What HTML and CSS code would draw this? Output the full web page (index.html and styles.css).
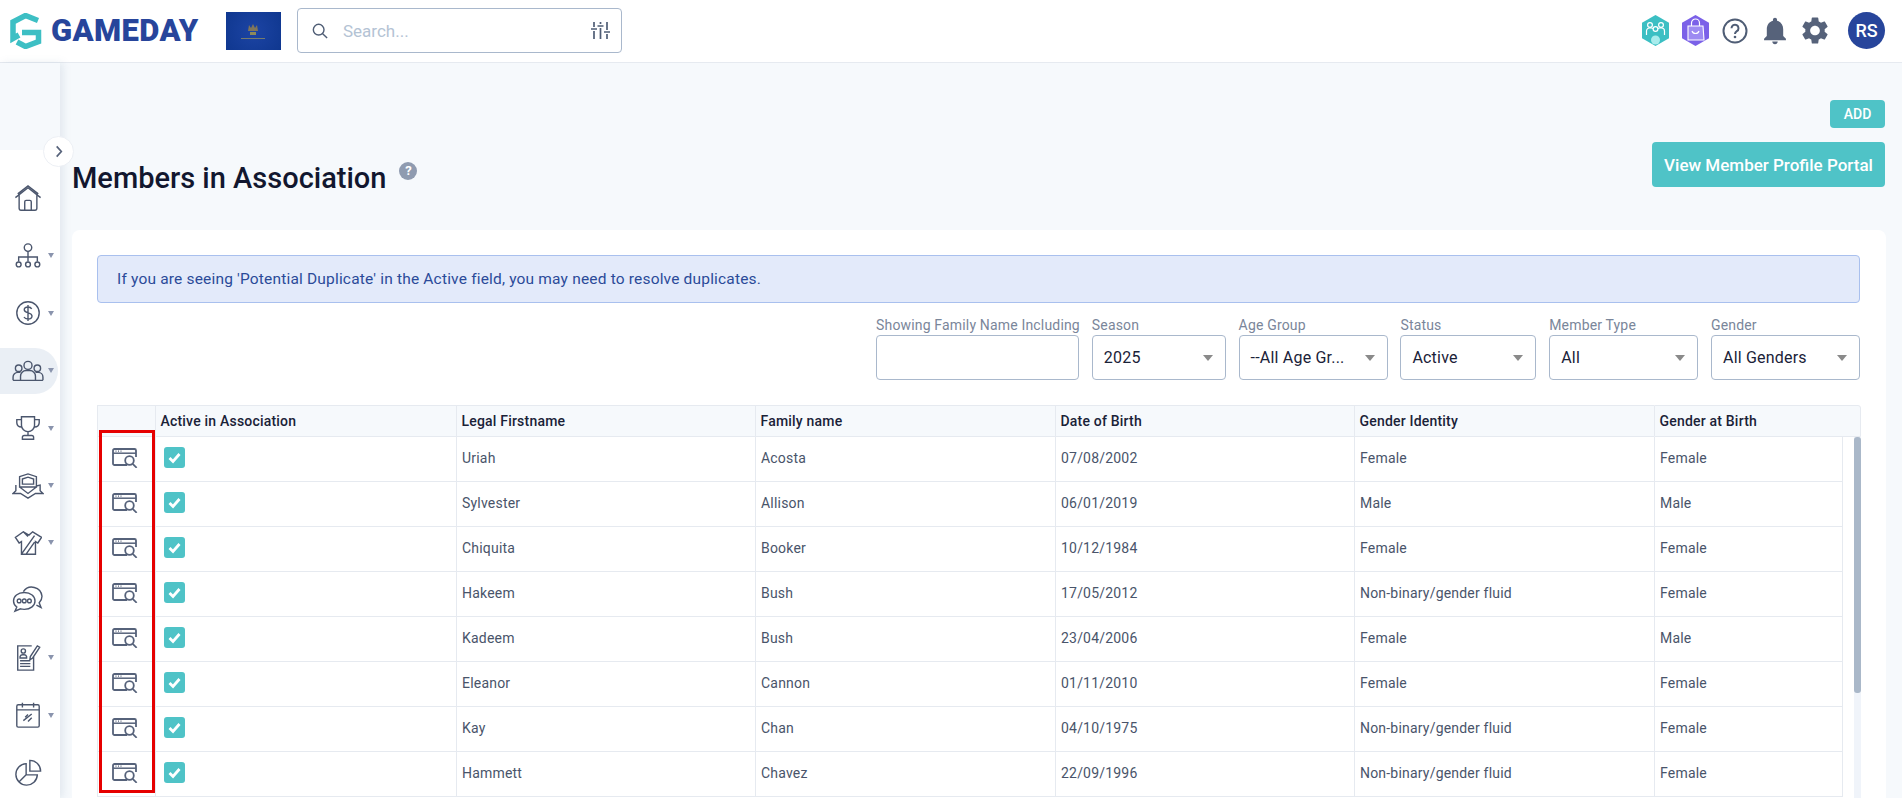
FILE: index.html
```html
<!DOCTYPE html>
<html lang="en">
<head>
<meta charset="utf-8">
<title>Members in Association</title>
<link rel="stylesheet" href="styles.css">
</head>
<body>
<svg class="defs" width="0" height="0" aria-hidden="true">
  <symbol id="view" viewBox="0 0 26 20">
    <path d="M15 17H2.5A1.5 1.5 0 0 1 1 15.500V2.500A1.500 1.500 0 0 1 2.500 1h20A1.500 1.500 0 0 1 24 2.500V9" fill="none" stroke="currentColor" stroke-width="1.800"/>
    <path d="M1 5.200h23" fill="none" stroke="currentColor" stroke-width="1.500"/>
    <path d="M3.500 3.100h1M6 3.100h1M8.500 3.100h1" fill="none" stroke="currentColor" stroke-width="1.200"/>
    <circle cx="17.500" cy="12.500" r="4.300" fill="#fff" stroke="currentColor" stroke-width="1.800"/>
    <path d="M20.700 15.800l4 4" fill="none" stroke="currentColor" stroke-width="1.800"/>
  </symbol>
  <symbol id="check" viewBox="0 0 21 21">
    <rect width="21" height="21" rx="3" fill="#4fc3c7"/>
    <path d="M5.500 11l3.500 3.500 6.500-7.500" fill="none" stroke="#fff" stroke-width="2.800"/>
  </symbol>
</svg>

<header class="topbar">
  <div class="brand">
    <svg class="brand-mark" viewBox="0 0 32 36" aria-hidden="true">
      <path d="M28 7.500L15.500 2.500 3 9v16.500l6-3.500" fill="none" stroke="#3dbfc4" stroke-width="5.500"/>
      <path d="M12 19.500h16.500v9L15.500 33.500 7 29" fill="none" stroke="#3dbfc4" stroke-width="5.500"/>
    </svg>
    <span class="brand-name">GAMEDAY</span>
  </div>
  <div class="flag" aria-hidden="true">
    <svg viewBox="0 0 55 38" width="55" height="38">
      <path d="M23 13l2 3 2-4 2 4 2-3 1 6h-10z" fill="#a98b3d" opacity=".7"/>
      <rect x="24" y="20" width="6" height="3" fill="#8d8a5a"/>
      <path d="M15 26.500h24" stroke="#8e8c62" stroke-width=".8"/>
    </svg>
  </div>
  <div class="search">
    <svg class="search-icon" viewBox="0 0 18 18" aria-hidden="true"><circle cx="7.500" cy="7.500" r="6" fill="none" stroke="#4f5d75" stroke-width="1.600"/><path d="M12 12l5 5" stroke="#4f5d75" stroke-width="1.600"/></svg>
    <span class="search-text">Search...</span>
    <svg class="filter-icon" viewBox="0 0 19 19" aria-hidden="true"><path d="M3 1v5M3 10v8M9.500 1v2M9.500 7v11M16 1v8M16 13v5M0 8h6M6.500 5h6M13 11h6" fill="none" stroke="#4f5d75" stroke-width="1.700"/></svg>
  </div>
  <div class="top-actions">
    <svg class="hex-a" viewBox="0 0 27 31" aria-hidden="true">
      <path d="M13.500 0L27 7.700v15.600L13.500 31 0 23.300V7.700z" fill="#3bbfc3"/>
      <g fill="none" stroke="#fff" stroke-width="1.200"><circle cx="8" cy="10" r="2.400"/><circle cx="19" cy="10" r="2.400"/><path d="M4.500 20v-4a3 3 0 0 1 3-3h2a3 3 0 0 1 1.500.5M22.500 20v-4a3 3 0 0 0-3-3h-2a3 3 0 0 0-1.500.5"/></g>
      <circle cx="13.500" cy="14" r="2.400" fill="none" stroke="#fff" stroke-width="1.200"/>
      <circle cx="13.500" cy="25" r="4.500" fill="#a8ecec"/>
    </svg>
    <svg class="hex-b" viewBox="0 0 27 31" aria-hidden="true">
      <path d="M13.500 0L27 7.700v15.600L13.500 31 0 23.300V7.700z" fill="#7b61e8"/>
      <path d="M6 11h15l1 14H6z" fill="#9d8bf2" stroke="#fff" stroke-width="1.100"/>
      <path d="M9.500 11V8a4 4 0 0 1 8 0v3M10 16a3.700 3.700 0 0 0 7 0" fill="none" stroke="#fff" stroke-width="1.200"/>
    </svg>
    <svg class="help" viewBox="0 0 26 26" aria-hidden="true"><circle cx="13" cy="13" r="11.500" fill="none" stroke="#4f5d75" stroke-width="2"/><path d="M9.500 10.200a3.500 3.500 0 1 1 5.300 3c-1.200.8-1.800 1.300-1.800 2.800" fill="none" stroke="#4f5d75" stroke-width="2"/><circle cx="13" cy="19" r="1.300" fill="#4f5d75"/></svg>
    <svg class="bell" viewBox="3.500 2 17 20.500" aria-hidden="true"><path fill="#56627a" d="M12 22c1.100 0 2-.9 2-2h-4c0 1.100.9 2 2 2zm6-6v-5c0-3.070-1.630-5.640-4.500-6.320V4c0-.83-.67-1.500-1.500-1.500s-1.500.67-1.500 1.500v.68C7.640 5.360 6 7.920 6 11v5l-2 2v1h16v-1l-2-2z"/></svg>
    <svg class="gear" viewBox="2.500 2 19 20" aria-hidden="true"><path fill="#56627a" d="M19.140 12.940c.04-.3.06-.61.06-.94 0-.32-.02-.64-.07-.94l2.030-1.580c.18-.14.23-.41.12-.61l-1.920-3.320c-.12-.22-.37-.29-.59-.22l-2.390.96c-.5-.38-1.030-.7-1.620-.94l-.36-2.540c-.04-.24-.24-.41-.48-.41h-3.840c-.24 0-.43.17-.47.41l-.36 2.540c-.59.24-1.130.57-1.620.94l-2.390-.96c-.22-.08-.47 0-.59.22L2.740 8.870c-.12.21-.08.47.12.61l2.030 1.580c-.05.3-.09.63-.09.94s.02.64.07.94l-2.030 1.580c-.18.14-.23.41-.12.61l1.920 3.320c.12.22.37.29.59.22l2.390-.96c.5.38 1.030.7 1.620.94l.36 2.540c.05.24.24.41.48.41h3.840c.24 0 .44-.17.47-.41l.36-2.540c.59-.24 1.130-.56 1.620-.94l2.390.96c.22.08.47 0 .59-.22l1.920-3.320c.12-.22.07-.47-.12-.61l-2.010-1.580zM12 15.600c-1.980 0-3.600-1.620-3.600-3.600s1.620-3.600 3.600-3.600 3.600 1.620 3.600 3.600-1.620 3.600-3.600 3.600z"/></svg>
    <span class="avatar">RS</span>
  </div>
</header>

<div class="layout">
  <nav class="sidebar">
    <button class="toggle" aria-label="Expand"><svg viewBox="0 0 8 14" width="8" height="13" aria-hidden="true"><path d="M1.500 1.500L6.500 7l-5 5.500" fill="none" stroke="#56627a" stroke-width="1.800"/></svg></button>
    <div class="nav-space"></div>
    <a class="nav-item">
      <svg class="nav-icon" viewBox="0 0 30 30"><path d="M1.500 13.500L15 3l13.500 10.500M5.500 11V25a2 2 0 0 0 2 2h15a2 2 0 0 0 2-2V11M4 9.500L15 1l11 8.500M11.500 27v-9a1.500 1.500 0 0 1 1.500-1.500h4a1.500 1.500 0 0 1 1.500 1.500v9"/></svg>
    </a>
    <a class="nav-item has-sub">
      <svg class="nav-icon" viewBox="0 0 30 30"><circle cx="15" cy="6" r="4"/><path d="M15 10v6M5 21v-5h20v5M15 16v5"/><circle cx="5" cy="24" r="2.600"/><circle cx="15" cy="24" r="2.600"/><circle cx="25" cy="24" r="2.600"/></svg>
    </a>
    <a class="nav-item has-sub">
      <svg class="nav-icon" viewBox="0 0 30 30"><circle cx="15" cy="15" r="12"/><path d="M19 10.500c-.8-1.300-2.200-2-4-2-2.300 0-4 1.200-4 3.100 0 4.300 8.300 2.300 8.300 6.700 0 2-1.900 3.200-4.300 3.200-2 0-3.500-.8-4.300-2.200M15 6.500v17"/></svg>
    </a>
    <a class="nav-item has-sub active">
      <svg class="nav-icon wide" viewBox="0 0 34 30"><circle cx="17" cy="9" r="4.300"/><circle cx="7" cy="12" r="3.500"/><circle cx="27" cy="12" r="3.500"/><path d="M9 25v-4.500a6 6 0 0 1 6-6h4a6 6 0 0 1 6 6V25M1 25v-3.500A5 5 0 0 1 6 16.500h3M33 25v-3.500a5 5 0 0 0-5-5h-3M1 25h32"/></svg>
    </a>
    <a class="nav-item has-sub">
      <svg class="nav-icon" viewBox="0 0 30 30"><path d="M8 3h14v9a7 7 0 0 1-14 0zM8 6H3v3.500A5 5 0 0 0 8 14M22 6h5v3.500A5 5 0 0 1 22 14M15 19v4M9 27v-2a2 2 0 0 1 2-2h8a2 2 0 0 1 2 2v2z"/></svg>
    </a>
    <a class="nav-item has-sub">
      <svg class="nav-icon wide" viewBox="0 0 34 30"><path d="M8 5l9-3 9 3v11H8zM11 7.500l6-2 6 2V13H11zM8 16l9 7 9-7M4 14v6l-3 3h8l8 5 8-5h8l-3-3v-6l-4 1"/></svg>
    </a>
    <a class="nav-item has-sub">
      <svg class="nav-icon" viewBox="0 0 30 30"><path d="M10 3L1.500 9l4 6L8 13.500V27h15V13.500l2.500 1.500 4-6L20 3l-4 3.500zM10 3l5 5M8 27L22 7M13 27l9-13"/></svg>
    </a>
    <a class="nav-item">
      <svg class="nav-icon wide" viewBox="0 0 34 30"><path d="M12 6a11 11 0 0 1 20 5c0 3-1 5-3 7l2 5-5-2.500"/><path d="M13 7C6 7 1.500 11 1.500 16c0 2.700 1.300 5 3.500 6.500L3 27l6-2.500c1.300.4 2.600.5 4 .5 7 0 11.500-4 11.500-9s-4.500-9-11.500-9z" fill="#fff"/><circle cx="7.500" cy="16" r="2"/><circle cx="13" cy="16" r="2"/><circle cx="18.500" cy="16" r="2"/></svg>
    </a>
    <a class="nav-item has-sub">
      <svg class="nav-icon" viewBox="0 0 30 30"><path d="M21 14v14H4V2h15"/><circle cx="10" cy="7.500" r="2.300"/><path d="M6.500 15v-1.500a3 3 0 0 1 3-2h1a3 3 0 0 1 3 2V15zM6.500 18h11M6.500 21h11M6.500 24h11M27.500 3.500L20 15l-3 2 .5-3.500L25 2z"/></svg>
    </a>
    <a class="nav-item has-sub">
      <svg class="nav-icon" viewBox="0 0 30 30"><rect x="3" y="4" width="24" height="24" rx="1.500"/><path d="M3 9.500h24M9 2v5M21 2v5M10 21l9-7M12 17.500l3-3M15 22l4-4"/></svg>
    </a>
    <a class="nav-item">
      <svg class="nav-icon" viewBox="0 0 30 30"><path d="M13 5a11.500 11.500 0 1 0 12 12H13zM13 17l-8 8"/><path d="M17 1.500A11.500 11.500 0 0 1 28.500 13H17z"/></svg>
    </a>
  </nav>

  <main class="content">
    <div class="page-head">
      <div class="title-wrap">
        <h1 class="title">Members in Association</h1>
        <span class="title-help">?</span>
      </div>
      <div class="head-actions">
        <button class="btn btn-sm">ADD</button>
        <button class="btn btn-lg">View Member Profile Portal</button>
      </div>
    </div>

    <section class="card">
      <div class="alert">If you are seeing 'Potential Duplicate' in the Active field, you may need to resolve duplicates.</div>

      <div class="filters">
        <div class="field"><label class="field-label">Showing Family Name Including</label><div class="control"></div></div>
        <div class="field"><label class="field-label">Season</label><div class="control select">2025</div></div>
        <div class="field"><label class="field-label">Age Group</label><div class="control select">--All Age Gr...</div></div>
        <div class="field"><label class="field-label">Status</label><div class="control select">Active</div></div>
        <div class="field"><label class="field-label">Member Type</label><div class="control select">All</div></div>
        <div class="field"><label class="field-label">Gender</label><div class="control select">All Genders</div></div>
      </div>

      <div class="table-wrap">
        <table class="grid">
          <colgroup>
            <col class="c-view"><col class="c-active"><col class="c-first"><col class="c-family"><col class="c-dob"><col class="c-identity"><col class="c-birth"><col class="c-gutter">
          </colgroup>
          <thead>
            <tr><th></th><th>Active in Association</th><th>Legal Firstname</th><th>Family name</th><th>Date of Birth</th><th>Gender Identity</th><th colspan="2">Gender at Birth</th></tr>
          </thead>
          <tbody>
            <tr><td class="ic"><svg class="view-icon"><use href="#view"/></svg></td><td class="ck"><svg class="check"><use href="#check"/></svg></td><td>Uriah</td><td>Acosta</td><td>07/08/2002</td><td>Female</td><td>Female</td><td class="gutter"></td></tr>
            <tr><td class="ic"><svg class="view-icon"><use href="#view"/></svg></td><td class="ck"><svg class="check"><use href="#check"/></svg></td><td>Sylvester</td><td>Allison</td><td>06/01/2019</td><td>Male</td><td>Male</td><td class="gutter"></td></tr>
            <tr><td class="ic"><svg class="view-icon"><use href="#view"/></svg></td><td class="ck"><svg class="check"><use href="#check"/></svg></td><td>Chiquita</td><td>Booker</td><td>10/12/1984</td><td>Female</td><td>Female</td><td class="gutter"></td></tr>
            <tr><td class="ic"><svg class="view-icon"><use href="#view"/></svg></td><td class="ck"><svg class="check"><use href="#check"/></svg></td><td>Hakeem</td><td>Bush</td><td>17/05/2012</td><td>Non-binary/gender fluid</td><td>Female</td><td class="gutter"></td></tr>
            <tr><td class="ic"><svg class="view-icon"><use href="#view"/></svg></td><td class="ck"><svg class="check"><use href="#check"/></svg></td><td>Kadeem</td><td>Bush</td><td>23/04/2006</td><td>Female</td><td>Male</td><td class="gutter"></td></tr>
            <tr><td class="ic"><svg class="view-icon"><use href="#view"/></svg></td><td class="ck"><svg class="check"><use href="#check"/></svg></td><td>Eleanor</td><td>Cannon</td><td>01/11/2010</td><td>Female</td><td>Female</td><td class="gutter"></td></tr>
            <tr><td class="ic"><svg class="view-icon"><use href="#view"/></svg></td><td class="ck"><svg class="check"><use href="#check"/></svg></td><td>Kay</td><td>Chan</td><td>04/10/1975</td><td>Non-binary/gender fluid</td><td>Female</td><td class="gutter"></td></tr>
            <tr><td class="ic"><svg class="view-icon"><use href="#view"/></svg></td><td class="ck"><svg class="check"><use href="#check"/></svg></td><td>Hammett</td><td>Chavez</td><td>22/09/1996</td><td>Non-binary/gender fluid</td><td>Female</td><td class="gutter"></td></tr>
          </tbody>
        </table>
        <div class="scrollbar"><div class="thumb"></div></div>
        <div class="highlight"></div>
      </div>
    </section>
  </main>
</div>
</body>
</html>
```
FILE: styles.css
```css
* { box-sizing: border-box; }
html, body { height: 100%; }
body {
  margin: 0;
  height: 798px;
  overflow: hidden;
  display: flex;
  flex-direction: column;
  background: #f6f9fc;
  font-family: Roboto, "Liberation Sans", sans-serif;
  color: #49546a;
}
.defs { position: absolute; }

/* top bar */
.topbar {
  flex: 0 0 63px;
  display: flex;
  align-items: center;
  background: #fff;
  border-bottom: 1px solid #e6eaf0;
  padding: 0 17px 1px 10px;
}
.brand { display: flex; align-items: center; width: 216px; gap: 9px; }
.brand-mark { width: 32px; height: 36px; }
.brand-name {
  font-size: 31px;
  font-weight: 900;
  line-height: 36px;
  color: #27459b;
  letter-spacing: .4px;
}
.flag {
  width: 55px;
  height: 38px;
  background: radial-gradient(circle at 50% 50%, #1c44a4, #0f378f);
}
.flag svg { display: block; }
.search {
  width: 325px;
  height: 45px;
  margin-left: 16px;
  display: flex;
  align-items: center;
  padding: 0 11px 0 14px;
  background: #fff;
  border: 1px solid #a9b8cc;
  border-radius: 4px;
}
.search-icon { width: 16px; height: 16px; }
.search-text { flex: 1; margin-left: 15px; font-size: 17px; color: #b4c3d4; }
.filter-icon { width: 19px; height: 19px; }
.top-actions { margin-left: auto; display: flex; align-items: center; }
.hex-a { width: 27px; height: 31px; }
.hex-b { width: 27px; height: 31px; margin-left: 13px; }
.help { width: 26px; height: 26px; margin-left: 13px; }
.bell { width: 24px; height: 28px; margin-left: 15px; }
.gear { width: 26px; height: 27px; margin-left: 15px; }
.avatar {
  width: 37px;
  height: 37px;
  margin-left: 20px;
  border-radius: 50%;
  background: #27459b;
  color: #fff;
  font-size: 18px;
  font-weight: 500;
  display: flex;
  align-items: center;
  justify-content: center;
}

/* main layout */
.layout { flex: 1; display: flex; min-height: 0; }
.sidebar {
  position: relative;
  flex: 0 0 60px;
  display: flex;
  flex-direction: column;
  background: #fff;
  box-shadow: 3px 0 8px rgba(120, 140, 170, .16);
}
.nav-space { flex: 0 0 87px; background: #f6f9fc; margin-bottom: 20px; }
.toggle {
  position: absolute;
  left: 43px;
  top: 73px;
  width: 31px;
  height: 31px;
  padding: 0;
  display: flex;
  align-items: center;
  justify-content: center;
  background: #fff;
  border: 1px solid #edf0f5;
  border-radius: 50%;
}
.nav-item {
  position: relative;
  flex: 0 0 57.4px;
  display: flex;
  align-items: center;
  padding-left: 14px;
}
.nav-icon {
  width: 28px;
  height: 28px;
  fill: none;
  stroke: #4b566d;
  stroke-width: 1.500;
}
.nav-icon.wide { width: 32px; margin-left: -2px; }
.has-sub::after {
  content: "";
  position: absolute;
  left: 48px;
  top: 26px;
  border-left: 3px solid transparent;
  border-right: 3px solid transparent;
  border-top: 5px solid #8a94ad;
}
.active::before {
  content: "";
  position: absolute;
  left: 0;
  top: 6px;
  width: 58px;
  height: 46px;
  background: #eaeff5;
  border-radius: 0 23px 23px 0;
}
.active .nav-icon { position: relative; fill: none; }
.active.has-sub::after { z-index: 1; }

/* content */
.content { flex: 1; min-width: 0; padding: 37px 16px 0 12px; }
.page-head {
  display: flex;
  justify-content: space-between;
  align-items: flex-end;
  height: 87px;
  padding-right: 1px;
  margin-bottom: 43px;
}
.title-wrap { display: flex; align-items: flex-start; margin-bottom: -11px; }
.title {
  margin: 0;
  font-size: 29px;
  line-height: 40px;
  font-weight: 500;
  color: #12172f;
}
.title-help {
  width: 18px;
  height: 18px;
  margin: 4px 0 0 13px;
  border-radius: 50%;
  background: #8f9bb0;
  color: #fff;
  font-size: 13px;
  font-weight: 700;
  line-height: 18px;
  text-align: center;
}
.head-actions { display: flex; flex-direction: column; align-items: flex-end; gap: 14px; }
.btn {
  border: 0;
  color: #fff;
  background: #4fc3c7;
  font-family: inherit;
  font-weight: 500;
  border-radius: 4px;
  padding: 0;
}
.btn-sm { width: 55px; height: 28px; font-size: 14px; }
.btn-lg { width: 233px; height: 45px; font-size: 17px; }

.card {
  height: 600px;
  padding: 25px 25px 0;
  background: #fff;
  border-radius: 8px 8px 0 0;
}
.alert {
  height: 48px;
  margin-right: 1px;
  padding-left: 19px;
  display: flex;
  align-items: center;
  background: #e3eafa;
  border: 1px solid #a9c0ee;
  border-radius: 4px;
  color: #2b4a99;
  font-size: 15.500px;
  letter-spacing: .18px;
}
.filters {
  display: flex;
  justify-content: flex-end;
  gap: 12.800px;
  margin: 13px 1px 25px 0;
}
.field { display: flex; flex-direction: column; }
.field:nth-child(1) { width: 203px; }
.field:nth-child(2) { width: 134px; }
.field:nth-child(3) { width: 149px; }
.field:nth-child(4) { width: 136px; }
.field:nth-child(5), .field:nth-child(6) { width: 149px; }
.field-label {
  height: 19px;
  font-size: 14px;
  line-height: 19px;
  color: #7a869a;
  white-space: nowrap;
  letter-spacing: .17px;
}
.control {
  position: relative;
  height: 45px;
  padding-left: 11px;
  display: flex;
  align-items: center;
  background: #fff;
  border: 1px solid #a9b8cc;
  border-radius: 4px;
  font-size: 16px;
  color: #1a2238;
  letter-spacing: .2px;
}
.select::after {
  content: "";
  position: absolute;
  right: 12px;
  top: 19px;
  border-left: 5px solid transparent;
  border-right: 5px solid transparent;
  border-top: 6px solid #8a8a8a;
}

/* table */
.table-wrap { position: relative; }
.grid {
  width: 1764px;
  table-layout: fixed;
  border-collapse: separate;
  border-spacing: 0;
  font-size: 14px;
  letter-spacing: .2px;
}
.c-view { width: 58px; }
.c-active { width: 301px; }
.c-first { width: 299px; }
.c-family { width: 300px; }
.c-dob { width: 299px; }
.c-identity { width: 300px; }
.c-birth { width: 188px; }
.c-gutter { width: 19px; }
.grid th {
  height: 32px;
  padding: 0 4.500px;
  text-align: left;
  font-weight: 500;
  color: #1a2238;
  background: #f6f9fc;
  border-top: 1px solid #e6eaf0;
  border-bottom: 1px solid #e6eaf0;
  border-left: 1px solid #e6eaf0;
}
.grid th:last-child { border-right: 1px solid #e6eaf0; border-radius: 0 3px 0 0; }
.grid td {
  height: 45px;
  padding: 0 5px 2px;
  border-bottom: 1px solid #e6eaf0;
  border-left: 1px solid #e6eaf0;
  white-space: nowrap;
}
.grid td.ic { padding: 0 0 2px 14px; }
.grid td.ck { padding: 0 0 3px 8px; }
.grid td.gutter { border-bottom: 0; }
.view-icon { display: block; width: 26px; height: 20px; color: #56627a; }
.check { display: block; width: 21px; height: 21px; }
.scrollbar {
  position: absolute;
  right: 0;
  top: 32px;
  width: 7px;
  height: 400px;
  background: #f0f4fa;
}
.thumb { height: 256px; background: #aab8c9; border-radius: 3px; }
.highlight {
  position: absolute;
  left: 2px;
  top: 25px;
  width: 56px;
  height: 363px;
  border: 3px solid #e60000;
}
```
